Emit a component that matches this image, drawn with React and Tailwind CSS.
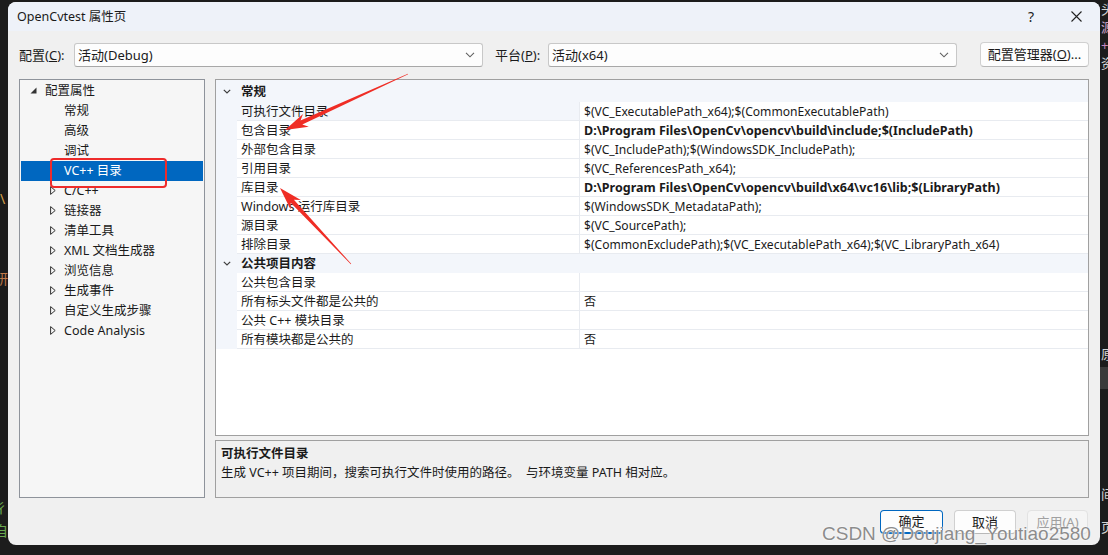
import React from 'react';

const F = "font-['Noto_Sans','Noto_Sans_CJK_SC',sans-serif]";

function Chevron({ stroke = '#606060' }) {
  return (
    <svg width="10" height="6" viewBox="0 0 10 6">
      <path d="M1 0.8 L5 4.8 L9 0.8" fill="none" stroke={stroke} strokeWidth="1.1" />
    </svg>
  );
}

function SmallChevron() {
  return (
    <svg width="8" height="5" viewBox="0 0 8 5">
      <path d="M0.8 0.8 L4 4 L7.2 0.8" fill="none" stroke="#404040" strokeWidth="1.2" />
    </svg>
  );
}

function OpenTri() {
  return (
    <svg width="7" height="7" viewBox="0 0 7 7">
      <path d="M6.5 0.5 L6.5 6.5 L0.5 6.5 Z" fill="#333" />
    </svg>
  );
}

function ClosedTri() {
  return (
    <svg width="6" height="9" viewBox="0 0 6 9">
      <path d="M0.6 0.6 L5.2 4.5 L0.6 8.4 Z" fill="none" stroke="#333" strokeWidth="1" />
    </svg>
  );
}

function arrowPts(tx, ty, hx, hy) {
  const dx = hx - tx, dy = hy - ty;
  const L = Math.hypot(dx, dy);
  const ux = dx / L, uy = dy / L;
  const nx = -uy, ny = ux;
  const headLen = 23, headW = 7, shaftW = 2.2, notch = 5;
  const bx = hx - ux * headLen, by = hy - uy * headLen;
  const sx = hx - ux * (headLen - notch), sy = hy - uy * (headLen - notch);
  const p = [
    [tx + nx * 0.3, ty + ny * 0.3],
    [sx + nx * shaftW, sy + ny * shaftW],
    [bx + nx * headW, by + ny * headW],
    [hx, hy],
    [bx - nx * headW, by - ny * headW],
    [sx - nx * shaftW, sy - ny * shaftW],
    [tx - nx * 0.3, ty - ny * 0.3],
  ];
  return p.map((q) => q[0].toFixed(1) + ',' + q[1].toFixed(1)).join(' ');
}

const tree = [
  { label: '配置属性', kind: 'root' },
  { label: '常规' },
  { label: '高级' },
  { label: '调试' },
  { label: 'VC++ 目录', selected: true },
  { label: 'C/C++', closed: true },
  { label: '链接器', closed: true },
  { label: '清单工具', closed: true },
  { label: 'XML 文档生成器', closed: true },
  { label: '浏览信息', closed: true },
  { label: '生成事件', closed: true },
  { label: '自定义生成步骤', closed: true },
  { label: 'Code Analysis', closed: true },
];

const general = [
  ['可执行文件目录', '$(VC_ExecutablePath_x64);$(CommonExecutablePath)', false, true],
  ['包含目录', 'D:\\Program Files\\OpenCv\\opencv\\build\\include;$(IncludePath)', true],
  ['外部包含目录', '$(VC_IncludePath);$(WindowsSDK_IncludePath);'],
  ['引用目录', '$(VC_ReferencesPath_x64);'],
  ['库目录', 'D:\\Program Files\\OpenCv\\opencv\\build\\x64\\vc16\\lib;$(LibraryPath)', true],
  ['Windows 运行库目录', '$(WindowsSDK_MetadataPath);'],
  ['源目录', '$(VC_SourcePath);'],
  ['排除目录', '$(CommonExcludePath);$(VC_ExecutablePath_x64);$(VC_LibraryPath_x64)'],
];

const publicItems = [
  ['公共包含目录', ''],
  ['所有标头文件都是公共的', '否'],
  ['公共 C++ 模块目录', ''],
  ['所有模块都是公共的', '否'],
];

function PropRow({ name, value, bold, sel }) {
  return (
    <div className="flex h-[19px]">
      <div className="w-[21px] bg-[#f3f6fb]" />
      <div className="flex flex-1 border-b border-[#e8ebf0]">
        <div
          className={
            'w-[343px] pl-[4px] pt-[2px] flex items-center border-r border-[#e8ebf0] whitespace-nowrap ' +
            (sel ? 'bg-[#f3f6fb]' : 'bg-white')
          }
        >
          {name}
        </div>
        <div
          className={
            'flex-1 pl-[4px] pt-[2px] flex items-center whitespace-nowrap ' +
            (bold ? 'font-bold text-[12.5px]' : 'text-[12.1px]')
          }
        >
          {value}
        </div>
      </div>
    </div>
  );
}

function CatRow({ label, h }) {
  return (
    <div className={'flex items-center bg-[#f3f6fb] ' + h}>
      <div className="w-[21px] flex justify-center items-center">
        <SmallChevron />
      </div>
      <div className="pl-[4px] pt-[2px] font-bold">{label}</div>
    </div>
  );
}

function Combo({ text }) {
  return (
    <div className="w-[409px] h-[24px] bg-[#fdfdfd] border border-[#c8c8c8] border-b-[#a8a8a8] rounded-[3px] flex items-center pl-[3px] pr-[7px]">
      <span className="flex-1 text-[13px] pt-[2px]">{text}</span>
      <Chevron />
    </div>
  );
}

export default function App() {
  return (
    <div className={'relative w-[1108px] h-[555px] bg-[#1c1c1c] overflow-hidden text-[#1a1a1a] ' + F}>
      {/* background code fragments */}
      <div className="absolute left-[1101px] top-[0px] text-[13px] leading-[18px] text-[#d4d4d4] whitespace-nowrap">
        <div>头</div>
        <div className="text-[#c8a2c8]">源</div>
        <div className="text-[#c586c0]">+</div>
        <div>资</div>
      </div>
      <div className="absolute left-[1101px] top-[345px] text-[13px] text-[#d4d4d4]">原</div>
      <div className="absolute left-[1100px] top-[367px] w-[8px] h-[22px] bg-[#3a3a3a]" />
      <div className="absolute left-[1101px] top-[485px] text-[13px] text-[#d4d4d4]">间</div>
      <div className="absolute left-[1101px] top-[518px] text-[13px] text-[#d4d4d4]">页</div>
      <div className="absolute left-[0px] top-[188px] text-[14px] text-[#d7a04b]">\</div>
      <div className="absolute left-[-6px] top-[268px] text-[14px] text-[#c07a4a]">研</div>
      <div className="absolute left-[-6px] top-[497px] text-[14px] text-[#6aa84f]">彳</div>
      <div className="absolute left-[-6px] top-[520px] text-[14px] text-[#6aa84f]">自</div>

      {/* dialog */}
      <div className="absolute left-[8px] top-[2px] w-[1092px] h-[543px] bg-[#f0f0f0] rounded-[8px] overflow-hidden flex flex-col">
        {/* title bar */}
        <div className="h-[29px] bg-[#eef2f9] flex items-center pl-[9px] pr-[18px] shrink-0">
          <span className="text-[12.5px] flex-1 pt-[1px]">OpenCvtest 属性页</span>
          <span className="text-[14px] mr-[37px] text-[#222]">?</span>
          <svg width="11" height="11" viewBox="0 0 11 11">
            <path d="M0.5 0.5 L10.5 10.5 M10.5 0.5 L0.5 10.5" stroke="#222" strokeWidth="1.1" />
          </svg>
        </div>

        {/* body */}
        <div className="flex flex-col px-[11px] pt-[11px]">
          {/* config row */}
          <div className="flex items-center h-[25px]">
            <div className="w-[55px] text-[13px] pt-[2px]">
              配置(<span className="underline">C</span>):
            </div>
            <Combo text="活动(Debug)" />
            <div className="ml-[12px] w-[53px] text-[13px] pt-[2px]">
              平台(<span className="underline">P</span>):
            </div>
            <Combo text="活动(x64)" />
            <div className="ml-auto w-[109px] h-[25px] bg-[#fdfdfd] border border-[#d0d0d0] border-b-[#b8b8b8] rounded-[4px] flex items-center justify-center text-[13px] pt-[1px]">
              配置管理器(<span className="underline">O</span>)...
            </div>
          </div>

          {/* main */}
          <div className="flex mt-[12px] h-[419px] gap-[10px]">
            {/* tree */}
            <div className="relative w-[186px] h-[419px] bg-[#f6f6f6] border border-[#8e939b] text-[12.5px]">
              {tree.map((it, i) => (
                <div
                  key={i}
                  className={
                    'h-[20px] mx-[1px] relative whitespace-nowrap ' +
                    (i === 4 ? 'mt-[1px] ' : '') +
                    (i === 5 ? 'mt-[-1px] ' : '') +
                    (it.selected ? 'bg-[#0067c0] text-white' : '')
                  }
                >
                  {it.kind === 'root' ? (
                    <>
                      <span className="absolute left-[9px] top-[7px] flex">
                        <OpenTri />
                      </span>
                      <span className="absolute left-[24px] top-0 h-full flex items-center pt-[2px]">{it.label}</span>
                    </>
                  ) : (
                    <>
                      {it.closed && (
                        <span className="absolute left-[29px] top-[6px] flex">
                          <ClosedTri />
                        </span>
                      )}
                      <span className={'absolute left-[43px] top-0 h-full flex items-center ' + (it.selected ? 'pt-[1px]' : 'pt-[2px]')}>
                        {it.label}
                      </span>
                    </>
                  )}
                </div>
              ))}
              <div className="absolute left-[30px] top-[78px] w-[117px] h-[30px] border-[2.5px] border-[#ee2b2b] rounded-[4px]" />
            </div>

            {/* right column */}
            <div className="flex-1 flex flex-col gap-[4px]">
              <div className="h-[359px] bg-white border border-[#a0a0a0] text-[12.5px] overflow-hidden">
                <CatRow label="常规" h="h-[22px]" />
                {general.map((r, i) => (
                  <PropRow key={i} name={r[0]} value={r[1]} bold={r[2]} sel={r[3]} />
                ))}
                <CatRow label="公共项目内容" h="h-[19px]" />
                {publicItems.map((r, i) => (
                  <PropRow key={i} name={r[0]} value={r[1]} />
                ))}
              </div>
              <div className="h-[58px] bg-[#f0f0f0] border border-[#a0a0a0] pl-[5px] pt-[3px] text-[12.5px]">
                <div className="font-bold leading-[19px]">可执行文件目录</div>
                <div className="leading-[19px] whitespace-pre">生成 VC++ 项目期间，搜索可执行文件时使用的路径。  与环境变量 PATH 相对应。</div>
              </div>
            </div>
          </div>

          {/* buttons */}
          <div className="flex justify-end mt-[12px] h-[24px] gap-[11px] pr-[1px] text-[13px]">
            <div className="w-[63px] h-[24px] bg-[#fdfdfd] border border-[#0067c0] border-b-[2px] rounded-[4px] flex items-center justify-center pt-[1px]">
              确定
            </div>
            <div className="w-[62px] h-[24px] bg-[#fdfdfd] border border-[#d0d0d0] border-b-[#b8b8b8] rounded-[4px] flex items-center justify-center pt-[1px]">
              取消
            </div>
            <div className="w-[61px] h-[24px] bg-[#f5f5f5] border border-[#e2e2e2] rounded-[4px] flex items-center justify-center text-[#a0a0a0] pt-[1px]">
              应用(A)
            </div>
          </div>
        </div>
      </div>

      {/* red arrows */}
      <svg className="absolute left-0 top-0 pointer-events-none" width="1108" height="555">
        <polygon points={arrowPts(408, 74, 285, 130)} fill="#ef2d25" />
        <polygon points={arrowPts(351, 264, 280, 188)} fill="#ef2d25" />
      </svg>

      {/* watermark */}
      <div className="absolute left-[822px] top-[522px] font-['Liberation_Sans',Arial,sans-serif] text-[19px] leading-[24px] text-[#8c8c8c] whitespace-nowrap [text-shadow:0_0_2px_#ffffff,0_0_1px_#ffffff]">
        CSDN @Doujiang_Youtiao2580
      </div>
    </div>
  );
}
